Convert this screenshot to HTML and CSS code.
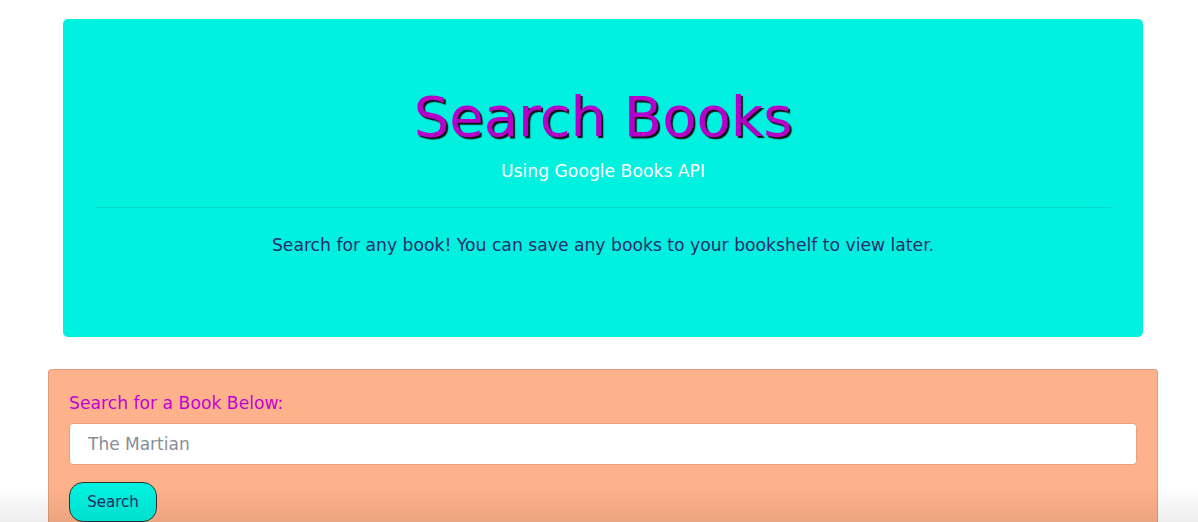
FILE: index.html
```html
<!DOCTYPE html>
<html lang="en">
<head>
<meta charset="utf-8">
<title>Search Books</title>
<link rel="stylesheet" href="styles.css">
</head>
<body>
<div class="page">
  <header class="jumbotron">
    <h1 class="title">Search Books</h1>
    <p class="subtitle">Using Google Books API</p>
    <hr class="divider">
    <p class="lead">Search for any book! You can save any books to your bookshelf to view later.</p>
  </header>
  <section class="card">
    <form class="card-body">
      <label class="label" for="q">Search for a Book Below:</label>
      <input class="input" id="q" type="text" placeholder="The Martian">
      <button class="btn" type="button">Search</button>
    </form>
  </section>
</div>
<div class="bottom-shade"></div>
</body>
</html>
```

FILE: styles.css
```css
* { box-sizing: border-box; }
html, body { margin: 0; padding: 0; background: #fff; }
body {
  font-family: "DejaVu Sans", Verdana, sans-serif;
  color: #212529;
  overflow: hidden;
}
.page {
  padding-top: 19px;
  display: flex;
  flex-direction: column;
}
.jumbotron {
  margin-left: 63px;
  width: 1080px;
  height: 318px;
  background: #00f1e0;
  border-radius: 5px;
  padding: 64px 32px 0;
  text-align: center;
}
.title {
  margin: 0;
  font-size: 56px;
  font-weight: 400;
  line-height: 68px;
  color: #b500c9;
  text-shadow: 2px 2px 1px #111;
}
.subtitle {
  margin: 8px 0 0;
  font-size: 17.2px;
  line-height: 24px;
  color: #fff;
}
.divider {
  margin: 24px 0 0;
  border: 0;
  border-top: 1px solid rgba(0, 0, 0, 0.1);
}
.lead {
  margin: 24px 0 0;
  font-size: 17.2px;
  line-height: 26px;
  color: #252d6b;
}
.card {
  margin-top: 32px;
  margin-left: 48px;
  width: 1110px;
  background: #feb28b;
  border: 1px solid rgba(0, 0, 0, 0.12);
  border-radius: 4px;
  height: 200px;
}
.card-body {
  padding: 20px;
  display: flex;
  flex-direction: column;
  align-items: flex-start;
}
.label {
  font-size: 17.2px;
  line-height: 26px;
  color: #c400d4;
  margin-bottom: 7px;
}
.input {
  width: 100%;
  height: 42px;
  border: 1px solid #e7a27f;
  border-radius: 4px;
  background: #fff;
  padding: 0 18px;
  font-family: "DejaVu Sans", Verdana, sans-serif;
  font-size: 17px;
  color: #495057;
}
.input::placeholder { color: #878d97; }
.btn {
  margin-top: 17px;
  width: 88px;
  height: 40px;
  background: #00f1e0;
  border: 1px solid #333;
  border-radius: 14px;
  font-family: "DejaVu Sans", Verdana, sans-serif;
  font-size: 15px;
  color: #222a66;
  padding: 0;
}
.bottom-shade {
  position: fixed;
  left: 0;
  right: 0;
  bottom: 0;
  height: 36px;
  background: linear-gradient(rgba(0, 0, 0, 0), rgba(0, 0, 0, 0.07));
  pointer-events: none;
}
```
